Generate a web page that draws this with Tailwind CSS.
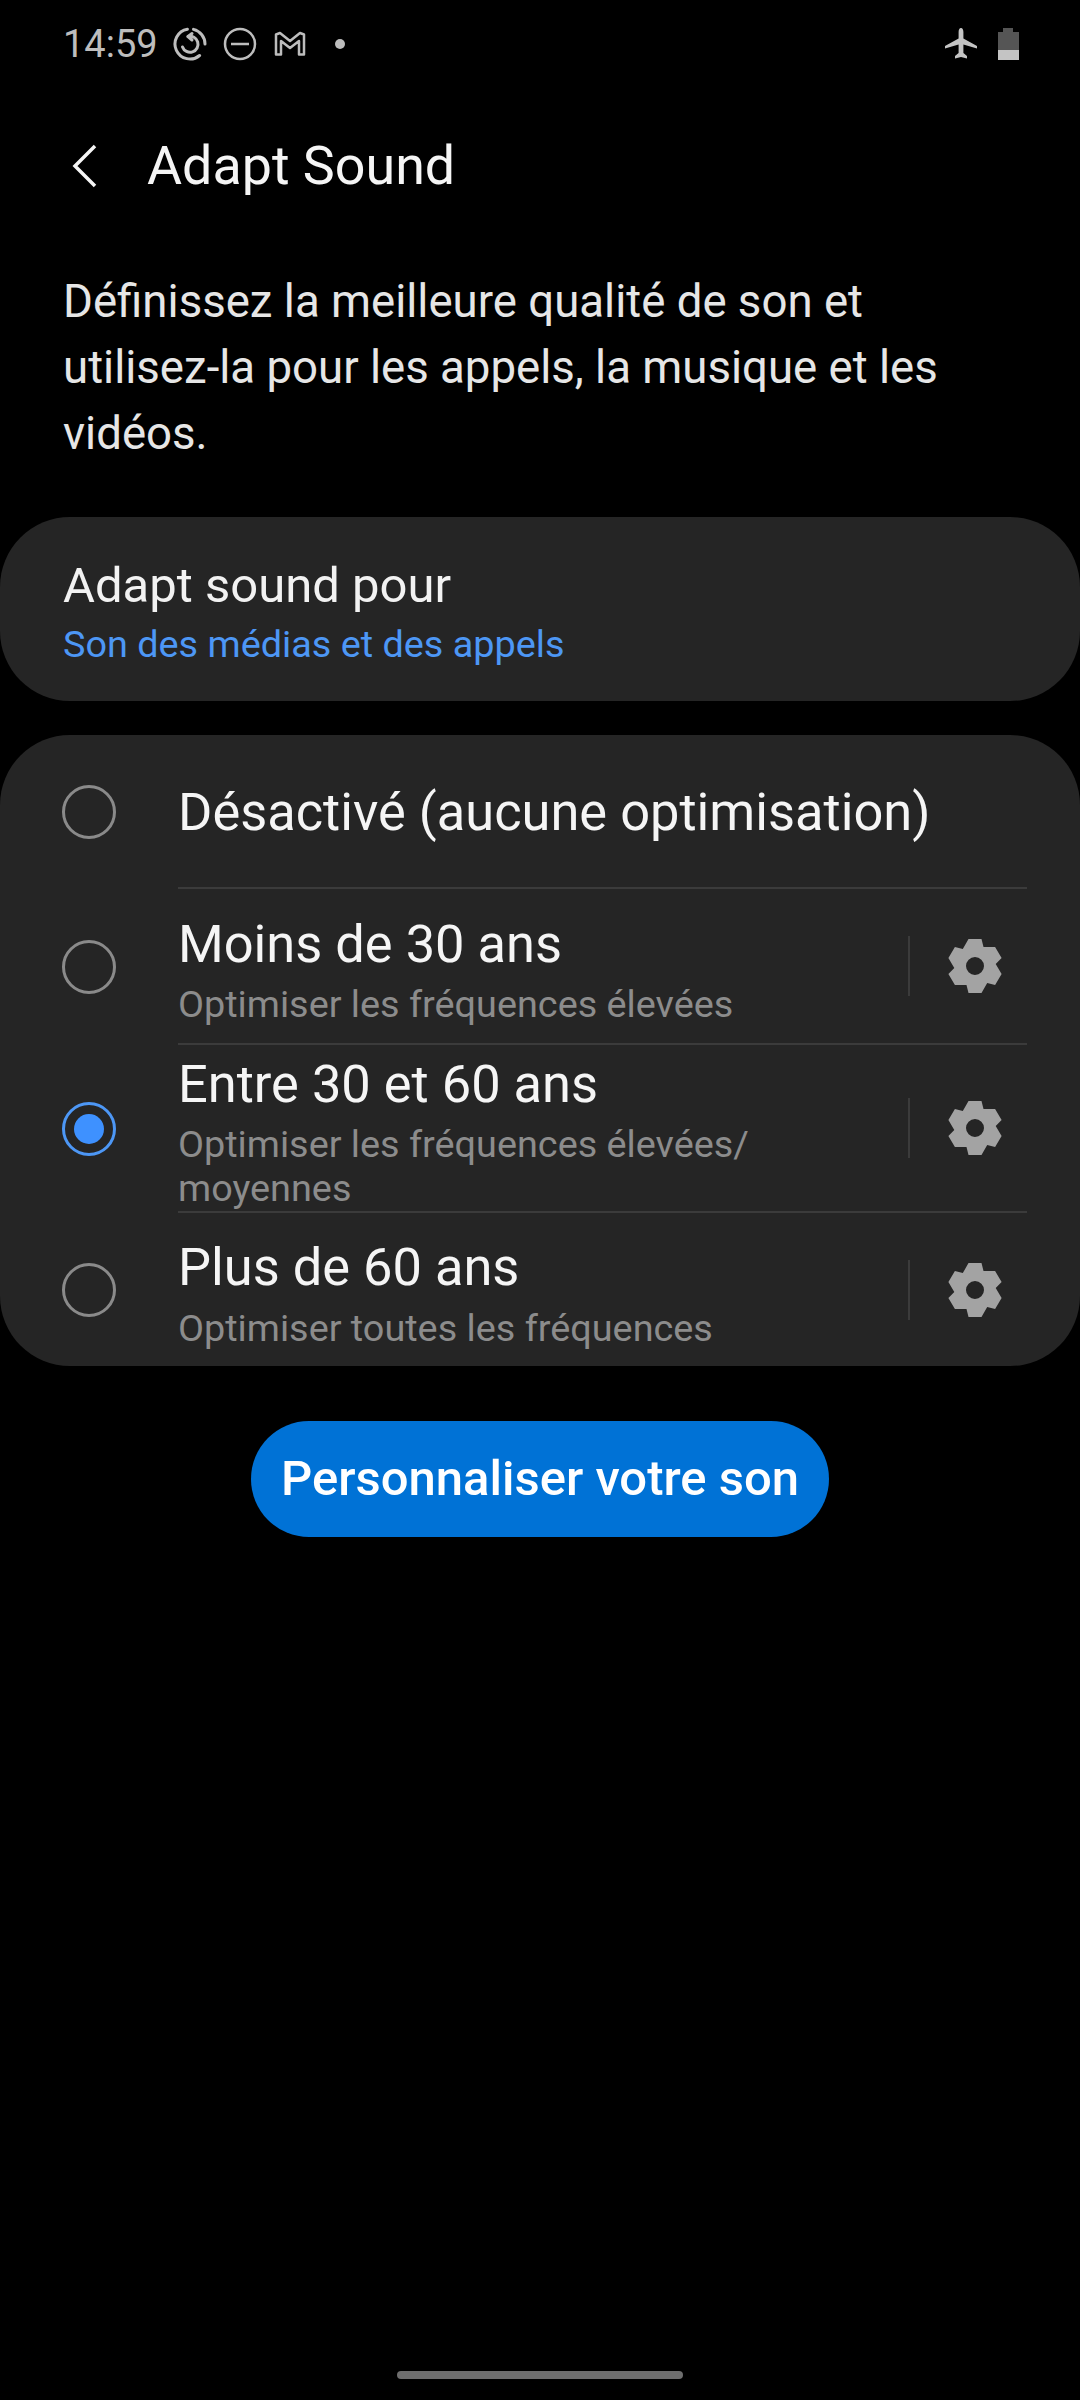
<!DOCTYPE html>
<html lang="fr">

<head>
    <meta charset="UTF-8">
    <title>Adapt Sound</title>
    <script src="https://cdn.jsdelivr.net/npm/@tailwindcss/browser@4"></script>
</head>

<body class="bg-black font-['Roboto',sans-serif]">
    <div class="relative w-[1080px] h-[2400px] bg-black overflow-hidden">

        <!-- Status bar -->
        <div class="flex items-center h-[88px] pl-[63px] pr-[61px] text-[#bdbdbd]">
            <span class="text-[38px] leading-none">14:59</span>
            <svg class="ml-[15px] w-[34px] h-[34px]" viewBox="0 0 34 34" fill="none" stroke="#bdbdbd" stroke-width="3" stroke-linecap="round">
                <path d="M14.400 2.200A15 15 0 1 0 26.600 28.500" />
                <path d="M20.500 2.400A15 15 0 0 1 32 17" />
                <path d="M9.500 20A8 8 0 1 0 15 9.500" />
                <path d="M15 9.500l4-3M15 9.500l4 3.500" />
            </svg>
            <svg class="ml-[16px] w-[34px] h-[34px]" viewBox="0 0 34 34" fill="none" stroke="#bdbdbd" stroke-width="2.500">
                <circle cx="17" cy="17" r="15" />
                <path d="M8 17h18" />
            </svg>
            <svg class="ml-[17px] w-[32px] h-[26px]" viewBox="0 0 32 26" fill="none" stroke="#bdbdbd" stroke-width="2.500" stroke-linejoin="round">
                <path d="M2 3.500 6 2 16 10 26 2 30 3.500V23.500H25V10L16 17 7 10V23.500H2Z" />
            </svg>
            <span class="ml-[29px] w-[10px] h-[10px] rounded-full bg-[#bdbdbd]"></span>
            <svg class="ml-auto w-[34px] h-[34px]" viewBox="0 0 34 34" fill="#c4c4c4">
                <path d="M17 1c1.600 0 2.400 2 2.400 4v6.500L33 19v2.500l-13.600-4V26l3.600 3v2.500L17 30l-6 1.500V29l3.600-3v-8.500L1 21.500V19l13.600-7.500V5c0-2 .8-4 2.400-4z" />
            </svg>
            <div class="ml-[19px] flex flex-col items-center w-[22px]">
                <span class="w-[10px] h-[4px] bg-[#555]"></span>
                <span class="w-[21px] h-[18px] bg-[#555]"></span>
                <span class="w-[21px] h-[10px] bg-[#c4c4c4]"></span>
            </div>
        </div>

        <!-- Header -->
        <div class="flex items-center h-[66px] mt-[45px] pl-[71px]">
            <svg class="w-[26px] h-[44px]" viewBox="0 0 26 44" fill="none" stroke="#f5f5f5" stroke-width="3.500">
                <path d="M24 2 4 22l20 20" />
            </svg>
            <h1 class="ml-[50px] text-[53.800px] leading-none text-[#f5f5f5]">Adapt Sound</h1>
        </div>

        <!-- Description -->
        <p class="mt-[70px] px-[63px] text-[45.600px] leading-[66px] text-[#e6e6e6]">Définissez la meilleure qualité de son et utilisez-la pour les appels, la musique et les vidéos.</p>

        <!-- Adapt sound pour -->
        <div class="mt-[50px] h-[184px] rounded-[70px] bg-[#252525] pl-[63px] pt-[41px]">
            <p class="text-[49px] leading-[56px] text-[#f2f2f2]">Adapt sound pour</p>
            <p class="mt-[8px] text-[37.800px] leading-[44px] text-[#4d97f5]">Son des médias et des appels</p>
        </div>

        <!-- Age options -->
        <div class="mt-[34px] h-[631px] rounded-[70px] bg-[#252525] pl-[62px] pr-[53px]">
            <div class="flex items-center h-[154px]">
                <span class="w-[54px] h-[54px] rounded-full border-[3px] border-[#8a8a8a] shrink-0"></span>
                <div class="ml-[62px] flex-1 self-stretch border-b-2 border-[#3b3b3b] pt-[49px]">
                    <p class="text-[52.400px] leading-[56px] text-[#f5f5f5]">Désactivé (aucune optimisation)</p>
                </div>
            </div>

            <div class="flex items-center h-[156px]">
                <span class="w-[54px] h-[54px] rounded-full border-[3px] border-[#8a8a8a] shrink-0"></span>
                <div class="ml-[62px] flex-1 self-stretch flex items-center border-b-2 border-[#3b3b3b]">
                    <div class="flex-1 pt-[9px]">
                        <p class="text-[52.400px] leading-[56px] text-[#f5f5f5]">Moins de 30 ans</p>
                        <p class="mt-[10px] text-[37.800px] leading-[44px] text-[#8c8c8c]">Optimiser les fréquences élevées</p>
                    </div>
                    <div class="w-[2px] h-[60px] bg-[#3b3b3b]"></div>
                    <svg class="ml-[38px] mr-[25px] w-[54px] h-[56px]" viewBox="-27 -28 54 56" fill="#a3a3a3" fill-rule="evenodd">
                        <path d="M-6.500-27H6.500L8.500-19 20.100-19.100 26.600-7.900 20.700-2.100 26.600 7.900 20.100 19.100 12.200 16.900 6.500 27H-6.500L-8.500 19-20.100 19.100-26.600 7.900-20.700 2.100-26.600-7.900-20.100-19.100-12.200-16.900ZM0-9A9 9 0 1 0 0 9 9 9 0 1 0 0-9Z" />
                    </svg>
                </div>
            </div>

            <div class="flex items-center h-[168px]">
                <span class="w-[54px] h-[54px] rounded-full border-[3px] border-[#4d97f5] flex items-center justify-center shrink-0">
                    <span class="w-[30px] h-[30px] rounded-full bg-[#3e91ff]"></span>
                </span>
                <div class="ml-[62px] flex-1 self-stretch flex items-center border-b-2 border-[#3b3b3b]">
                    <div class="flex-1 pt-[10px]">
                        <p class="text-[52.400px] leading-[56px] text-[#f5f5f5]">Entre 30 et 60 ans</p>
                        <p class="mt-[10px] w-[640px] text-[37.800px] leading-[44px] text-[#8c8c8c]">Optimiser les fréquences élevées/ moyennes</p>
                    </div>
                    <div class="w-[2px] h-[60px] bg-[#3b3b3b]"></div>
                    <svg class="ml-[38px] mr-[25px] w-[54px] h-[56px]" viewBox="-27 -28 54 56" fill="#a3a3a3" fill-rule="evenodd">
                        <path d="M-6.500-27H6.500L8.500-19 20.100-19.100 26.600-7.900 20.700-2.100 26.600 7.900 20.100 19.100 12.200 16.900 6.500 27H-6.500L-8.500 19-20.100 19.100-26.600 7.900-20.700 2.100-26.600-7.900-20.100-19.100-12.200-16.900ZM0-9A9 9 0 1 0 0 9 9 9 0 1 0 0-9Z" />
                    </svg>
                </div>
            </div>

            <div class="flex items-center h-[153px]">
                <span class="w-[54px] h-[54px] rounded-full border-[3px] border-[#8a8a8a] shrink-0"></span>
                <div class="ml-[62px] flex-1 self-stretch flex items-center">
                    <div class="flex-1 pt-[9px]">
                        <p class="text-[52.400px] leading-[56px] text-[#f5f5f5]">Plus de 60 ans</p>
                        <p class="mt-[11px] text-[37.800px] leading-[44px] text-[#8c8c8c]">Optimiser toutes les fréquences</p>
                    </div>
                    <div class="w-[2px] h-[60px] bg-[#3b3b3b]"></div>
                    <svg class="ml-[38px] mr-[25px] w-[54px] h-[56px]" viewBox="-27 -28 54 56" fill="#a3a3a3" fill-rule="evenodd">
                        <path d="M-6.500-27H6.500L8.500-19 20.100-19.100 26.600-7.900 20.700-2.100 26.600 7.900 20.100 19.100 12.200 16.900 6.500 27H-6.500L-8.500 19-20.100 19.100-26.600 7.900-20.700 2.100-26.600-7.900-20.100-19.100-12.200-16.900ZM0-9A9 9 0 1 0 0 9 9 9 0 1 0 0-9Z" />
                    </svg>
                </div>
            </div>
        </div>

        <!-- Button -->
        <div class="mt-[55px] flex justify-center">
            <button class="w-[578px] h-[116px] rounded-full bg-[#0072d6] text-[49px] font-medium text-white">Personnaliser votre son</button>
        </div>

        <!-- Home indicator -->
        <div class="absolute bottom-[21px] left-[397px] w-[286px] h-[8px] rounded-full bg-[#6e6e6e]"></div>
    </div>
</body>

</html>
